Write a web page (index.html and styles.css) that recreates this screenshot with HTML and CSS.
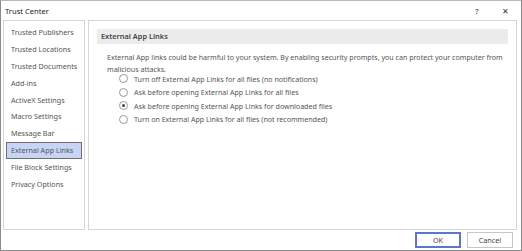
FILE: index.html
```html
<!DOCTYPE html>
<html lang="en">
<head>
  <meta charset="UTF-8" />
  <title>Trust Center</title>
  <link rel="stylesheet" href="styles.css">
</head>
<body>
  <div class="window">
    <div class="titlebar">
      <span class="title">Trust Center</span>
      <span class="title-btn">?</span>
      <span class="title-btn close">&#x2715;</span>
    </div>

    <div class="main">
      <ul class="nav">
        <li>Trusted Publishers</li>
        <li>Trusted Locations</li>
        <li>Trusted Documents</li>
        <li>Add-ins</li>
        <li>ActiveX Settings</li>
        <li>Macro Settings</li>
        <li>Message Bar</li>
        <li class="selected">External App Links</li>
        <li>File Block Settings</li>
        <li>Privacy Options</li>
      </ul>

      <div class="content">
        <div class="section-head">External App Links</div>
        <p class="desc">External App links could be harmful to your system. By enabling security prompts, you can protect your computer from malicious attacks.</p>
        <div class="options">
          <label class="option"><span class="radio"></span>Turn off External App Links for all files (no notifications)</label>
          <label class="option"><span class="radio"></span>Ask before opening External App Links for all files</label>
          <label class="option"><span class="radio checked"></span>Ask before opening External App Links for downloaded files</label>
          <label class="option"><span class="radio"></span>Turn on External App Links for all files (not recommended)</label>
        </div>
      </div>
    </div>

    <div class="footer">
      <button class="btn primary">OK</button>
      <button class="btn">Cancel</button>
    </div>
  </div>
</body>
</html>
```

FILE: styles.css
```css
body {
  margin: 0;
  font-family: 'Noto Sans', 'Open Sans', sans-serif;
  background: #fff;
}

.window {
  width: 522px;
  height: 251px;
  box-sizing: border-box;
  border: 1px solid #8a8a8a;
  border-top-color: #b8b8b8;
  display: flex;
  flex-direction: column;
  color: #444;
}

.titlebar {
  height: 19px;
  display: flex;
  align-items: center;
  padding: 0 2px 0 4px;
  font-size: 7.6px;
  color: #222;
}

.title {
  flex: 1;
}

.title-btn {
  width: 28px;
  text-align: center;
  color: #333;
}

.title-btn.close {
  font-size: 8px;
}

.main {
  display: flex;
  gap: 3px;
  padding: 0 4px 0 2px;
  height: 210px;
}

.nav {
  width: 82px;
  box-sizing: border-box;
  margin: 0;
  padding: 3px 2px;
  list-style: none;
  border: 1px solid #d6d6d6;
  font-size: 7.2px;
  color: #555;
}

.nav li {
  height: 14.9px;
  line-height: 14.9px;
  padding-left: 4px;
  border: 1px solid transparent;
  white-space: nowrap;
}

.nav li.selected {
  background: #c7d4f6;
  border-color: #6e6e6e;
}

.content {
  flex: 1;
  box-sizing: border-box;
  border: 1px solid #d6d6d6;
  padding: 8px 8px 0 8px;
}

.section-head {
  height: 15px;
  line-height: 15px;
  background: #ececec;
  padding-left: 4px;
  font-size: 7.4px;
  font-weight: 600;
  color: #444;
}

.desc {
  margin: 8px 0 0 10px;
  font-size: 7.1px;
  line-height: 11.5px;
  color: #555;
}

.options {
  margin: -3px 0 0 22px;
  display: flex;
  flex-direction: column;
}

.option {
  display: flex;
  align-items: center;
  height: 13.5px;
  font-size: 7.1px;
  color: #555;
}

.radio {
  width: 7px;
  height: 7px;
  border: 1px solid #999;
  border-radius: 50%;
  margin-right: 6px;
  display: flex;
  align-items: center;
  justify-content: center;
}

.radio.checked::after {
  content: "";
  width: 3px;
  height: 3px;
  border-radius: 50%;
  background: #444;
}

.footer {
  display: flex;
  justify-content: flex-end;
  gap: 6px;
  padding: 2px 8px 0 0;
}

.btn {
  width: 46px;
  height: 16px;
  padding: 0;
  background: #fff;
  border: 1px solid #c6c6c6;
  font-family: inherit;
  font-size: 7.2px;
  color: #444;
}

.btn.primary {
  border: 2px solid #5a77c9;
}
```
